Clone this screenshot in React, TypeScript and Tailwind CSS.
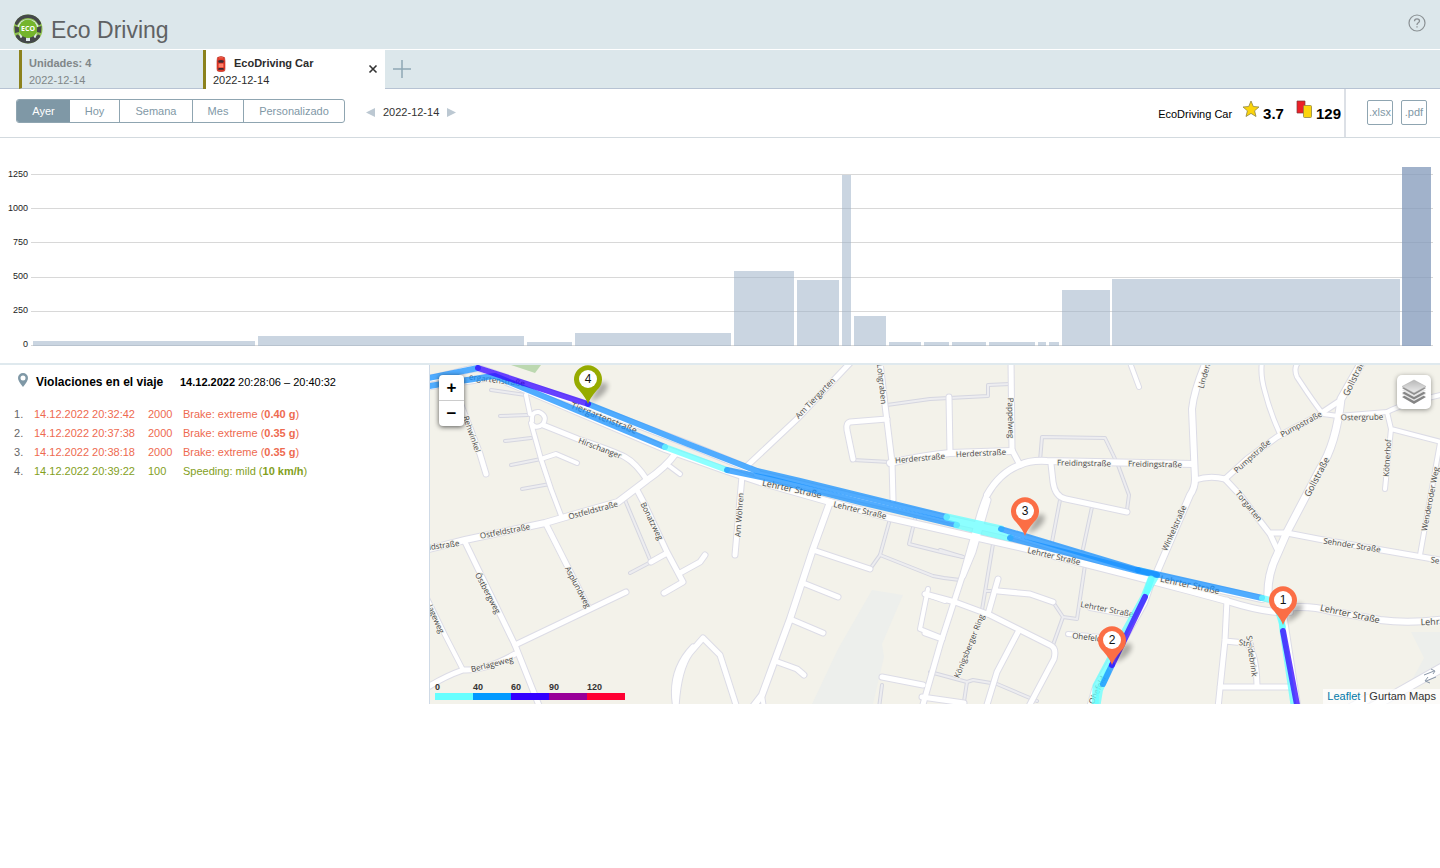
import React from 'react';

type Road = [d: string, width: number];
type Label = [text: string, x: number, y: number, angle: number, size?: number];

const bars: { x: number; w: number; top: number; active?: boolean }[] = [
  { x: 33, w: 222, top: 341 },
  { x: 258, w: 266, top: 336 },
  { x: 527, w: 45, top: 342 },
  { x: 575, w: 156, top: 333 },
  { x: 734, w: 60, top: 271 },
  { x: 797, w: 42, top: 280 },
  { x: 842, w: 9, top: 175 },
  { x: 854, w: 32, top: 316 },
  { x: 889, w: 32, top: 342 },
  { x: 924, w: 25, top: 342 },
  { x: 952, w: 34, top: 342 },
  { x: 989, w: 46, top: 342 },
  { x: 1038, w: 8, top: 342 },
  { x: 1049, w: 10, top: 342 },
  { x: 1062, w: 48, top: 290 },
  { x: 1112, w: 288, top: 279 },
  { x: 1402, w: 29, top: 167, active: true },
];
const gridLines = [174, 208, 242, 277, 311, 345];
const ticks = ['1250', '1000', '750', '500', '250', '0'];

const serviceRoads: string[] = [
  'M491 390L526 395', 'M500 416L528 415', 'M505 441L531 438', 'M511 465L541 459', 'M522 489L550 484',
  'M625 500L651 562L630 573', 'M890 519L880 555L870 569', 'M880 555L933 576L944 578L960 580',
  'M915 519L909 544L945 553L963 557', 'M853 460L890 462', 'M887 405L930 399L988 396L988 385L1010 384',
  'M882 685L879 708', 'M993 544L982 610', 'M986 591L998 591', 'M1053 602L1063 617L1053 645',
  'M1063 617L1077 619L1085 565', 'M1060 500L1052 542', 'M1092 507L1083 549',
  'M1040 461L1042 437L1105 438L1118 465L1129 495L1127 510',
  'M930 672L967 682L973 680L997 684L1037 701', 'M967 682L963 708', 'M940 550L963 557', 'M1252 644L1254 660',
];

const roads: Road[] = [
  ['M425 379C445 377 465 369 478 368L588 406L688 444L757 472', 6],
  ['M425 387L495 377L665 449L727 471L760 482L830 502L890 518L930 527L1027 549L1137 577L1190 591L1227 601Q1268 614 1290 612', 6],
  ['M757 474L947 519L1001 531L1138 572L1262 599', 6],
  ['M1284 608Q1310 605 1330 611L1380 620Q1410 624 1445 619', 6],
  ['M543 425L578 439Q616 452 625 457Q636 463 647 480', 5],
  ['M526 395L530 414M532 421Q531 411 539 412Q548 416 543 424Q536 430 531 423L541 459L551 489L562 518', 4],
  ['M541 459L556 454L577 463', 4],
  ['M425 550L465 540L545 523L562 518L618 502L647 480Q665 468 676 453', 6],
  ['M668 465L680 474', 4],
  ['M637 490L645 505L667 552L683 582L664 593M651 562L667 553M680 573L700 562L705 555', 5],
  ['M546 524L588 607', 5],
  ['M515 645L626 592', 5],
  ['M465 542L515 645L540 708', 5],
  ['M425 594L445 635L463 670', 4],
  ['M425 689Q443 677 463 670Q485 671 515 654', 5],
  ['M461 405L480 454L486 474', 5],
  ['M693 647Q669 672 676 708', 5],
  ['M676 708Q678 670 690 653L703 638L720 655L737 708', 5],
  ['M748 465L797 419L850 363', 5],
  ['M742 476L735 555', 5],
  ['M830 502L813 549L790 619L773 665L762 695L752 708', 6],
  ['M762 695L764 708', 4],
  ['M813 550L870 569M803 583L838 597M790 619L823 633M775 661L797 669L804 675', 5],
  ['M880 362L885 405L892 462L893 500', 5],
  ['M887 419L850 422Q846 423 847 430L853 459', 5],
  ['M928 589L920 629L940 637M928 595L945 601', 4],
  ['M882 677L923 685M922 697L964 703', 5],
  ['M949 397L950 453', 5],
  ['M1011 360L1012 450L1020 465', 5],
  ['M890 463Q920 456 950 453L1012 451', 6],
  ['M987 495Q1000 472 1020 465Q1030 460 1047 461L1193 464', 6],
  ['M987 495Q982 505 975 532L963 574L940 645L922 708', 5],
  ['M988 500L973 552L963 576', 5],
  ['M925 594L955 602L990 615L1050 645Q1057 648 1054 659L1028 708', 5],
  ['M1018 632L997 672L986 708M925 633L942 639', 5],
  ['M998 579L988 614M998 591L1030 594L1053 602', 5],
  ['M1051 464L1053 482Q1055 497 1066 499L1127 512', 5],
  ['M1129 360L1139 387', 4],
  ['M1157 572L1190 495Q1195 488 1195 479L1192 409Q1194 390 1206 362', 6],
  ['M1068 634L1100 637M1090 608L1128 615', 4],
  ['M1153 577L1144 603L1095 690L1090 708', 6],
  ['M1262 362Q1260 375 1265 392Q1270 412 1280 434', 4],
  ['M1299 362Q1293 367 1297 377L1307 392Q1318 408 1323 414L1338 416L1387 412Q1405 403 1445 394', 4],
  ['M1323 412L1338 402', 5],
  ['M1362 362L1341 399Q1336 445 1320 469L1287 532L1277 555Q1267 575 1268 598', 7],
  ['M1195 480Q1210 475 1225 479Q1235 470 1247 459L1277 437L1323 413', 5],
  ['M1225 479L1240 495L1270 534L1277 549M1270 533L1287 533L1318 539L1445 561', 5],
  ['M1387 412L1391 429L1385 489M1391 429L1445 443M1440 443L1420 555', 4],
  ['M1227 600L1225 640L1218 708M1225 641L1245 643Q1256 648 1257 685M1220 687L1292 687', 5],
  ['M1283 610L1298 708', 5],
  ['M1345 711L1367 699M1360 714L1445 666', 8],
];

const labels: Label[] = [
  ['ergartenstraße', 497, 380, 7], ['Tiergartenstraße', 604, 418, 22, 9], ['Hirschanger', 600, 448, 21],
  ['Rehwinkel', 472, 434, 71], ['Ostfeldstraße', 593, 510, -15], ['Ostfeldstraße', 505, 531, -11],
  ['ldstraße', 444, 545, -8], ['Bonatzweg', 652, 521, 64], ['Asplundweg', 578, 587, 62],
  ['Östbergweg', 488, 593, 62], ['lageweg', 436, 619, 66], ['Berlageweg', 492, 664, -14],
  ['Am Tiergarten', 815, 398, -46], ['Lohgraben', 882, 384, 84], ['Am Wöhren', 739, 515, -86],
  ['Lehrter  Straße', 792, 489, 12, 9], ['Lehrter Straße', 860, 510, 13], ['Herderstraße', 920, 458, -5],
  ['Herderstraße', 981, 453, -3], ['Pappelweg', 1011, 418, 89], ['Freidingstraße', 1084, 463, 1],
  ['Freidingstraße', 1155, 464, 1], ['Lehrter Straße', 1054, 556, 13], ['Lehrter Straße', 1107, 609, 11],
  ['Ohefeld', 1087, 637, 7], ['Königsberger Ring', 969, 646, -68], ['Ohefeld', 1097, 690, -65],
  ['Winkelstraße', 1174, 528, -66], ['Lehrter Straße', 1190, 585, 12, 9], ['Linden', 1204, 376, -74],
  ['Pumpstraße', 1301, 424, -28], ['Pumpstraße', 1252, 456, -42], ['Torgarten', 1249, 506, 51],
  ['Gollstraße', 1355, 376, -64, 9], ['Gollstraße', 1317, 477, -62, 9], ['Ostergrube', 1362, 417, -1],
  ['Kötnerhof', 1387, 458, -86], ['Wenderoder Weg', 1430, 499, -79], ['Sehnder Straße', 1352, 545, 9],
  ['Se', 1435, 560, 9], ['Lehrter Straße', 1350, 614, 12, 9], ['Lehr', 1430, 622, -2, 9],
  ['Stridebrink', 1252, 656, 82], ['Stri', 1245, 643, 8],
];

const tracks: { d: string; color: string; width?: number }[] = [
  { d: 'M1281 600L1282 627L1294 708', color: '#66ffff' },
  { d: 'M424 379L478 368', color: '#1590ff' },
  { d: 'M424 387Q478 378 495 376L665 447', color: '#1590ff' },
  { d: 'M665 447L727 470', color: '#66ffff' },
  { d: 'M727 470L770 479L860 502L957 525', color: '#1590ff' },
  { d: 'M588 404L688 444L757 471L800 481L947 517', color: '#1590ff' },
  { d: 'M478 368L588 404', color: '#3300ff' },
  { d: 'M947 517L1001 529M957 525L1010 538', color: '#66ffff', width: 7 },
  { d: 'M1138 570L1157 575L1147 592', color: '#66ffff' },
  { d: 'M1010 538L1138 571L1157 575', color: '#1590ff' },
  { d: 'M1001 529L1138 570', color: '#1590ff' },
  { d: 'M1138 570L1262 598', color: '#1590ff' },
  { d: 'M1262 598L1275 601L1283 627', color: '#66ffff' },
  { d: 'M1151 579L1144 597L1124 633L1096 686L1095 708', color: '#66ffff', width: 7 },
  { d: 'M1151 579L1146 594M1108 672L1100 690L1097 708', color: '#66ffff' },
  { d: 'M1112 665L1103 684', color: '#1590ff' },
  { d: 'M1145 597L1112 665', color: '#3300ff' },
  { d: 'M1283 631L1298 710', color: '#3300ff' },
];

const pins = [
  { n: 4, x: 588, y: 379, color: '#96ab00' },
  { n: 3, x: 1025, y: 511, color: '#fb6e45' },
  { n: 1, x: 1283, y: 600, color: '#fb6e45' },
  { n: 2, x: 1112, y: 640, color: '#fb6e45' },
];

const violations = [
  { time: '14.12.2022 20:32:42', points: 2000, kind: 'Brake: extreme', value: '0.40 g', mild: false },
  { time: '14.12.2022 20:37:38', points: 2000, kind: 'Brake: extreme', value: '0.35 g', mild: false },
  { time: '14.12.2022 20:38:18', points: 2000, kind: 'Brake: extreme', value: '0.35 g', mild: false },
  { time: '14.12.2022 20:39:22', points: 100, kind: 'Speeding: mild', value: '10 km/h', mild: true },
];

const legend = [
  { from: '0', color: 'bg-[#66ffff]' },
  { from: '40', color: 'bg-[#0099ff]' },
  { from: '60', color: 'bg-[#3300ff]' },
  { from: '90', color: 'bg-[#990099]' },
  { from: '120', color: 'bg-[#ff0033]' },
];

function Logo() {
  return (
    <svg viewBox="0 0 30 30" className="size-[30px]" aria-hidden="true">
      <circle cx="15" cy="15" r="14.500" fill="#8fc24f" />
      <path d="M3.600 9.200A12.800 12.800 0 0 1 26.400 9.200" fill="none" stroke="#45484a" strokeWidth="3.400" strokeLinecap="round" />
      <path d="M4.500 22.300A12.800 12.800 0 0 0 25.500 22.300" fill="none" stroke="#45484a" strokeWidth="3.400" strokeLinecap="round" />
      <path d="M4.500 12A11.500 11.500 0 0 1 25.500 12L24 14H6Z" fill="#dce7eb" />
      <path d="M6 19L7.500 24L11 23ZM24 19L22.500 24L19 23ZM13 24H17V27H13Z" fill="#dce7eb" />
      <path d="M1.500 12L6.500 13.500L6 18L2 19ZM28.500 12L23.500 13.500L24 18L28 19Z" fill="#45484a" />
      <path d="M7.500 26L10 21L13 23V28ZM22.500 26L20 21L17 23V28Z" fill="#45484a" />
      <circle cx="15" cy="14.700" r="9.200" fill="#74b52c" />
      <text x="15" y="17.200" textAnchor="middle" fontSize="7" fontWeight="700" fill="#fff" className="font-['Open_Sans',sans-serif]">ECO</text>
    </svg>
  );
}

function Car() {
  return (
    <svg viewBox="0 0 10 16" className="h-4 w-[10px]" aria-hidden="true">
      <path d="M1.500 1.500Q5 -.5 8.500 1.500L9 5V13L8.500 15Q5 16.500 1.500 15L1 13V5Z" fill="#e23b2a" stroke="#b52a1c" strokeWidth=".6" />
      <path d="M2 4.800Q5 3.300 8 4.800L7.300 6.800H2.700ZM2.600 12H7.400L8 13.800H2Z" fill="#3b2a33" />
      <path d="M3 1.800H7M3 8H7V11H3Z" fill="#ff7a62" stroke="#ff9a84" strokeWidth=".5" />
    </svg>
  );
}

function MapDrawing() {
  return (
    <svg viewBox="430 365 1010 339" preserveAspectRatio="xMidYMid slice" className="block h-full w-full" role="img" aria-label="Mapa del viaje">
      <defs>
        <filter id="soft" x="-50%" y="-50%" width="200%" height="200%">
          <feGaussianBlur stdDeviation="2.500" />
        </filter>
      </defs>
      <rect x="430" y="365" width="1010" height="339" fill="#f3f2ea" />
      <path d="M511 365H541L535 373Z" fill="#bcd8b0" />
      <path d="M872 590L903 595L882 644L884 657L873 704H812L838 649Z" fill="#edefec" />
      <path d="M1411 632H1440V667L1412 680L1424 658Z" fill="#edefec" />
      <g fill="none" strokeLinejoin="round" strokeLinecap="round">
        {serviceRoads.map((d) => <path key={d} d={d} stroke="#d5d6e0" strokeWidth="4" />)}
        {serviceRoads.map((d) => <path key={d} d={d} stroke="#ededf0" strokeWidth="2" />)}
        {roads.map(([d, w]) => <path key={d} d={d} stroke="#dcdce6" strokeWidth={w + 2} />)}
        {roads.map(([d, w]) => <path key={d} d={d} stroke="#ffffff" strokeWidth={w} />)}
      </g>
      <path d="M1424 675L1434 671M1431 669L1435 671L1433 674M1426 681L1436 677M1428 677L1425 681L1430 683" fill="none" stroke="#8a97a8" />
      <g fill="#484848" textAnchor="middle" className="font-['Open_Sans','Noto_Sans',sans-serif]" stroke="#f6f5ef" strokeWidth="2" paintOrder="stroke" strokeLinejoin="round">
        {labels.map(([text, x, y, angle, size = 8]) => (
          <text key={`${text}-${x}`} x={x} y={y} dy="3" fontSize={size} transform={`rotate(${angle} ${x} ${y})`}>{text}</text>
        ))}
      </g>
      <g fill="none" strokeLinecap="round" strokeLinejoin="round">
        {tracks.map(({ d, color, width = 6 }) => <path key={d} d={d} stroke={color} strokeWidth={width} strokeOpacity=".75" />)}
      </g>
      {pins.map(({ n, x, y, color }) => (
        <g key={n} transform={`translate(${x} ${y})`}>
          <path d="M2 23L11 5Q22 0 19 10Q15 18 2 23Z" fill="#000" opacity=".3" filter="url(#soft)" />
          <path d="M0 25Q-2 19 -9 11A14 14 0 1 1 9 11Q2 19 0 25Z" fill={color} />
          <circle r="9" fill="#fff" />
          <text y="4" textAnchor="middle" fontSize="12" fill="#111" className="font-['Liberation_Sans',Arial,sans-serif]">{n}</text>
        </g>
      ))}
    </svg>
  );
}

export default function App() {
  return (
    <div className="min-h-screen bg-white font-['Liberation_Sans',Arial,sans-serif] text-[11px] text-black">
      <header className="flex h-[50px] items-center border-b border-white bg-[#dce7eb] pr-[10px] pl-[13px] pt-[9px]">
        <Logo />
        <h1 className="mt-[2px] ml-2 text-[23px] leading-7 text-[#5f6264]">Eco Driving</h1>
        <button aria-label="Ayuda" className="mb-[13px] ml-auto p-1">
          <svg viewBox="0 0 18 18" className="size-[18px]" fill="none" stroke="#8b9194">
            <circle cx="9" cy="9" r="8" strokeWidth="1.200" />
            <path d="M6.500 7.200Q6.500 4.800 9 4.800T11.500 7Q11.500 8 10 9Q9 9.700 9 11M9 12.300V13.600" strokeWidth="1.300" />
          </svg>
        </button>
      </header>

      <nav className="flex h-[39px] bg-[#dce7eb] text-[11px] leading-[17px]">
        <span className="w-[19px] border-b border-[#b7c3d3]" />
        <button className="w-[184px] border-b border-l-3 border-b-[#b7c3d3] border-l-[#8c821d] pt-[5px] pl-[7px] text-left text-[#808688]">
          <span className="block font-bold">Unidades: 4</span>
          <span className="block">2022-12-14</span>
        </button>
        <div className="flex w-[182px] border-l-3 border-[#8c821d] bg-white pt-[5px] pr-[6px] pl-[7px]">
          <button className="flex-1 text-left text-[#2c2c2c]">
            <span className="flex items-center gap-2 pl-[3px] font-bold"><Car />EcoDriving Car</span>
            <span className="block">2022-12-14</span>
          </button>
          <button aria-label="Cerrar" className="mt-2 size-[12px] self-start">
            <svg viewBox="0 0 12 12" className="size-3" stroke="#333" strokeWidth="1.600"><path d="M2.500 2.500L9.500 9.500M9.500 2.500L2.500 9.500" /></svg>
          </button>
        </div>
        <div className="flex-1 border-b border-[#b7c3d3] pl-[7px]">
          <button aria-label="Añadir" className="mt-[9px] block size-5">
            <svg viewBox="0 0 20 20" className="size-5" stroke="#8fa8b5" strokeWidth="1.500"><path d="M10 1V19M1 10H19" /></svg>
          </button>
        </div>
      </nav>

      <div className="flex h-[49px] items-stretch border-b border-[#d3dadf]">
        <div className="mt-[10px] ml-4 flex h-6 overflow-hidden rounded-[3px] border border-[#8fa5b1] text-[#7f98a6]">
          <button className="w-[53px] bg-[#7f98a6] text-white">Ayer</button>
          <button className="w-[49px]">Hoy</button>
          <button className="w-[73px] border-l border-[#8fa5b1]">Semana</button>
          <button className="w-[51px] border-l border-[#8fa5b1]">Mes</button>
          <button className="w-[101px] border-l border-[#8fa5b1]">Personalizado</button>
        </div>
        <div className="ml-[21px] flex items-center gap-2 pb-[2px] text-[#333]">
          <button aria-label="Anterior"><svg viewBox="0 0 9 9" className="size-[9px]"><path d="M9 0V9L0 4.500Z" fill="#bcc8d2" /></svg></button>
          <span>2022-12-14</span>
          <button aria-label="Siguiente"><svg viewBox="0 0 9 9" className="size-[9px]"><path d="M0 0V9L9 4.500Z" fill="#bcc8d2" /></svg></button>
        </div>
        <div className="ml-auto flex items-center border-r-2 border-[#dce0e6] pr-[3px]">
          <span className="mt-[3px] mr-[10px]">EcoDriving Car</span>
          <svg viewBox="0 0 18 18" className="mb-2 size-[18px]"><path d="M9 1L11.300 6.500L17 7L12.600 10.800L14 16.500L9 13.400L4 16.500L5.400 10.800L1 7L6.700 6.500Z" fill="#fbd40b" stroke="#8f8544" strokeWidth=".8" /></svg>
          <b className="mt-[3px] ml-[3px] text-[15px]">3.7</b>
          <svg viewBox="0 0 17 18" className="mb-[9px] ml-3 h-[18px] w-[17px]"><path d="M1 1H9V13H1Z" fill="#ec2027" stroke="#7c3b3b" strokeWidth=".7" /><rect x="7.500" y="5.500" width="8" height="12" rx="1" fill="#fbd40b" stroke="#8f8544" strokeWidth=".8" /></svg>
          <b className="mt-[3px] ml-[3px] text-[15px]">129</b>
        </div>
        <div className="flex items-center gap-2 pr-[13px] pb-[2px] pl-[21px] text-[#7f98a6]">
          <button className="h-[25px] w-[26px] overflow-hidden rounded-[2px] border border-[#8fa5b1]">.xlsx</button>
          <button className="h-[25px] w-[26px] overflow-hidden rounded-[2px] border border-[#8fa5b1]">.pdf</button>
        </div>
      </div>

      <section className="flex h-[227px] border-b-2 border-[#dfe9ee]">
        <div className="flex w-[31px] flex-col pt-[26px] pr-[3px] text-right text-[9px] text-[#222]">
          {ticks.map((t) => <span key={t} className="mb-[14px] h-5 leading-5">{t}</span>)}
        </div>
        <svg viewBox="31 138 1402 225" preserveAspectRatio="none" className="mr-[7px] h-[225px] min-w-0 flex-1" role="img" aria-label="Penalizaciones por viaje">
          {gridLines.map((y) => <rect key={y} x="31" y={y} width="1402" height="1" fill="#d8d8d8" />)}
          {bars.map((b) => (
            <rect key={b.x} x={b.x} y={b.top} width={b.w} height={346 - b.top} fill={b.active ? '#849abb' : '#9fb2c9'} fillOpacity={b.active ? 0.76 : 0.55} />
          ))}
        </svg>
      </section>

      <main className="flex">
        <aside className="w-[430px] shrink-0 border-r border-[#cfdae6] pl-[14px]">
          <h2 className="mt-2 flex h-[18px] items-center pl-[4px] text-[11px]">
            <svg viewBox="0 0 10 14" className="mb-1 h-[14px] w-[10px]"><path fillRule="evenodd" d="M5 0A5 5 0 0 1 10 5Q10 8 5 14Q0 8 0 5A5 5 0 0 1 5 0ZM5 2.500A2.500 2.500 0 1 0 5 7.500A2.500 2.500 0 1 0 5 2.500Z" fill="#7f98a6" /></svg>
            <b className="ml-2 w-[144px] text-[12px]">Violaciones en el viaje</b>
            <span><b>14.12.2022</b> 20:28:06 – 20:40:32</span>
          </h2>
          <table className="mt-[14px] table-fixed border-collapse text-left">
            <tbody>
              {violations.map((v, i) => (
                <tr key={v.time} className={v.mild ? 'h-[19px] text-[#83a01c]' : 'h-[19px] text-[#ee6a50]'}>
                  <td className="w-5 p-0 text-[#666]">{i + 1}.</td>
                  <td className="w-[114px] p-0">{v.time}</td>
                  <td className="w-[35px] p-0">{v.points}</td>
                  <td className="p-0">{v.kind} (<b>{v.value}</b>)</td>
                </tr>
              ))}
            </tbody>
          </table>
        </aside>

        <div className="relative h-[339px] min-w-0 flex-1 overflow-hidden">
          <MapDrawing />
          <div className="absolute top-[10px] left-[9px] flex flex-col rounded-[4px] bg-white shadow-[0_1px_5px_rgba(0,0,0,0.65)]">
            <button aria-label="Acercar" className="flex h-[26px] w-[25px] items-center justify-center border-b border-[#ccc] text-[17px] font-bold">+</button>
            <button aria-label="Alejar" className="flex h-[25px] w-[25px] items-center justify-center text-[17px] font-bold">−</button>
          </div>
          <button aria-label="Capas" className="absolute top-[10px] right-[9px] flex size-[34px] items-center justify-center rounded-[5px] bg-white shadow-[0_1px_5px_rgba(0,0,0,0.4)]">
            <svg viewBox="0 0 26 26" className="size-[26px]">
              <defs><linearGradient id="sheet" x1="0" y1="0" x2="0" y2="1"><stop offset="0" stopColor="#b8b8b8" /><stop offset="1" stopColor="#ececec" /></linearGradient></defs>
              <path d="M1 18L13 12L25 18L13 25Z" fill="#858585" />
              <path d="M1 15.500L13 10L25 15.500L13 22Z" fill="#e6e6e6" />
              <path d="M1 14L13 8L25 14L13 20.500Z" fill="#858585" />
              <path d="M1 11.500L13 5L25 11.500L13 18Z" fill="#e6e6e6" />
              <path d="M1 9L13 3L25 9L13 16Z" fill="#8c8c8c" />
              <path d="M1 7.500L13 1L25 7.500L13 14Z" fill="url(#sheet)" stroke="#aaa" strokeWidth=".5" />
            </svg>
          </button>
          <div className="absolute bottom-1 left-[5px] flex text-[9px] leading-3 font-bold text-[#333]">
            {legend.map((l) => (
              <div key={l.from} className="w-[38px]">
                <span className="block">{l.from}</span>
                <span className={`block h-[7px] ${l.color}`} />
              </div>
            ))}
          </div>
          <div className="absolute right-0 bottom-0 bg-white/70 px-1 leading-[15px] text-[#333]">
            <a href="#leaflet" className="text-[#0078a8]">Leaflet</a> | Gurtam Maps
          </div>
        </div>
      </main>
    </div>
  );
}
